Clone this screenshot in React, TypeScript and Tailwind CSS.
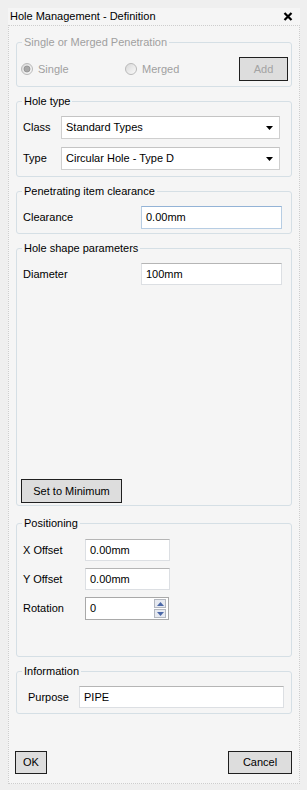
import React from "react";

const font = { fontFamily: '"Liberation Sans", Arial, sans-serif' };

function Radio({ checked }: { checked: boolean }) {
  return (
    <svg width="12" height="12" viewBox="0 0 12 12">
      <defs>
        <linearGradient id={checked ? "rg1" : "rg2"} x1="0" y1="0" x2="1" y2="1">
          <stop offset="0" stopColor="#d8d8d8" />
          <stop offset="1" stopColor="#fbfbfb" />
        </linearGradient>
      </defs>
      <circle cx="6" cy="6" r="5.5" fill={`url(#${checked ? "rg1" : "rg2"})`} stroke="#b9b9b9" />
      {checked && <circle cx="6" cy="6" r="3" fill="#a8a8a8" stroke="#8f8f8f" strokeWidth="0.8" />}
    </svg>
  );
}

function Group({
  legend,
  disabled,
  className,
  children,
}: {
  legend: string;
  disabled?: boolean;
  className: string;
  children: React.ReactNode;
}) {
  return (
    <fieldset className={`border border-[#d5dfe5] rounded-[3px] min-w-0 ${className}`}>
      <legend
        className={`ml-[5px] px-[2px] text-[11px] leading-[14px] ${disabled ? "text-[#a0a0a0]" : "text-black"}`}
      >
        {legend}
      </legend>
      {children}
    </fieldset>
  );
}

function Select({ value }: { value: string }) {
  return (
    <div className="w-[219px] h-[23px] bg-white border border-[#cfcfcf] border-t-[#c4c4c4] flex items-center pl-[4px] pr-[6px]">
      <span className="flex-1 text-[11px] text-black">{value}</span>
      <svg width="7" height="4" viewBox="0 0 7 4">
        <polygon points="0,0 7,0 3.5,4" fill="#000" />
      </svg>
    </div>
  );
}

function Input({ value, className, focused }: { value: string; className: string; focused?: boolean }) {
  return (
    <div
      className={`bg-white border flex items-center pl-[4px] text-[11px] text-black ${
        focused ? "border-[#b7cde3] border-t-[#93b3d6]" : "border-[#dcdfe3] border-t-[#b5b5b5]"
      } ${className}`}
    >
      {value}
    </div>
  );
}

function Btn({ children, className, disabled }: { children: React.ReactNode; className: string; disabled?: boolean }) {
  return (
    <div
      className={`border border-[#1f1f1f] bg-[#dddddd] flex items-center justify-center text-[11px] ${
        disabled ? "text-[#a3a3a3]" : "text-black"
      } ${className}`}
    >
      {children}
    </div>
  );
}

function SpinBtn({ up }: { up: boolean }) {
  return (
    <div className="w-[12px] h-[9px] border border-[#b4b8c0] bg-[#e6e9f0] flex items-center justify-center">
      <svg width="7" height="4" viewBox="0 0 7 4">
        {up ? (
          <polygon points="0,4 7,4 3.5,0" fill="#4b68a8" />
        ) : (
          <polygon points="0,0 7,0 3.5,4" fill="#4b68a8" />
        )}
      </svg>
    </div>
  );
}

export default function App() {
  return (
    <div className="w-[307px] h-[790px] bg-[#efefef] pt-[8px] px-[8px]" style={font}>
      <div className="w-[292px] bg-[#f5f5f5]">
        {/* title bar */}
        <div className="h-[17px] flex items-center pl-[2px] pr-[7px]">
          <span className="flex-1 text-[11px] text-black leading-none">Hole Management - Definition</span>
          <svg width="10" height="9" viewBox="0 0 10 9">
            <path d="M1.5 1 L8.5 8 M8.5 1 L1.5 8" stroke="#000" strokeWidth="2.2" />
          </svg>
        </div>
        {/* content */}
        <div className="h-[759px] border border-dotted border-[#cdcdcd] pt-[9px] pl-[7px] pr-[7px] flex flex-col">
          <Group legend="Single or Merged Penetration" disabled className="h-[52px]">
            <div className="mt-[8px] h-[24px] flex items-center pl-[4px] pr-[3px] text-[11px] text-[#a0a0a0]">
              <div className="w-[104px] flex items-center gap-[5px]">
                <Radio checked />
                <span>Single</span>
              </div>
              <div className="flex items-center gap-[5px]">
                <Radio checked={false} />
                <span>Merged</span>
              </div>
              <Btn disabled className="ml-auto w-[49px] h-[24px]">
                Add
              </Btn>
            </div>
          </Group>

          <Group legend="Hole type" className="h-[83px] mt-[7px]">
            <div className="mt-[8px] pl-[6px] flex flex-col gap-[8px] text-[11px] text-black">
              <div className="flex items-center">
                <span className="w-[38px]">Class</span>
                <Select value="Standard Types" />
              </div>
              <div className="flex items-center">
                <span className="w-[38px]">Type</span>
                <Select value="Circular Hole - Type D" />
              </div>
            </div>
          </Group>

          <Group legend="Penetrating item clearance" className="h-[50px] mt-[7px]">
            <div className="mt-[8px] pl-[6px] flex items-center text-[11px] text-black">
              <span className="w-[118px]">Clearance</span>
              <Input focused value="0.00mm" className="w-[141px] h-[23px]" />
            </div>
          </Group>

          <Group legend="Hole shape parameters" className="h-[265px] mt-[7px]">
            <div className="mt-[8px] pl-[6px] flex items-center text-[11px] text-black">
              <span className="w-[118px]">Diameter</span>
              <Input value="100mm" className="w-[141px] h-[22px]" />
            </div>
            <div className="pl-[4px] mt-[194px]">
              <Btn className="w-[101px] h-[24px]">Set to Minimum</Btn>
            </div>
          </Group>

          <Group legend="Positioning" className="h-[141px] mt-[10px]">
            <div className="mt-[9px] pl-[6px] flex flex-col gap-[7px] text-[11px] text-black">
              <div className="flex items-center">
                <span className="w-[62px]">X Offset</span>
                <Input value="0.00mm" className="w-[85px] h-[22px]" />
              </div>
              <div className="flex items-center">
                <span className="w-[62px]">Y Offset</span>
                <Input value="0.00mm" className="w-[85px] h-[22px]" />
              </div>
              <div className="flex items-center">
                <span className="w-[62px]">Rotation</span>
                <div className="w-[84px] h-[23px] bg-white border border-[#a9a9a9] flex items-center pl-[4px] pr-[2px]">
                  <span className="flex-1">0</span>
                  <div className="flex flex-col gap-[1px]">
                    <SpinBtn up />
                    <SpinBtn up={false} />
                  </div>
                </div>
              </div>
            </div>
          </Group>

          <Group legend="Information" className="h-[50px] mt-[7px]">
            <div className="mt-[8px] pl-[11px] flex items-center text-[11px] text-black">
              <span className="w-[51px]">Purpose</span>
              <Input value="PIPE" className="w-[205px] h-[22px]" />
            </div>
          </Group>

          <div className="mt-[37px] flex justify-between -ml-[1px]">
            <Btn className="w-[32px] h-[23px]">OK</Btn>
            <Btn className="w-[64px] h-[23px]">Cancel</Btn>
          </div>
        </div>
      </div>
    </div>
  );
}
